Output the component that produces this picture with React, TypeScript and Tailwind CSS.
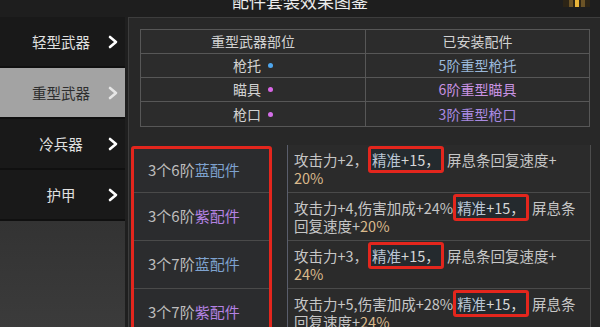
import React from "react";

type PartRow = { part: string; dot: string; installed: string; color: string };

const parts: PartRow[] = [
  { part: "枪托", dot: "bg-[#4ea6ee]", installed: "5阶重型枪托", color: "text-[#9ab8da]" },
  { part: "瞄具", dot: "bg-[#d866e6]", installed: "6阶重型瞄具", color: "text-[#c892e2]" },
  { part: "枪口", dot: "bg-[#d46ee8]", installed: "3阶重型枪口", color: "text-[#a98ae2]" },
];

const menu = [
  { label: "轻型武器", active: false },
  { label: "重型武器", active: true },
  { label: "冷兵器", active: false },
  { label: "护甲", active: false },
];

function Chevron({ light }: { light?: boolean }) {
  return (
    <svg width="10" height="14" viewBox="0 0 10 14" className="ml-[8px] shrink-0">
      <polyline
        points="2,2 8,7 2,12"
        fill="none"
        stroke={light ? "#e6e6e6" : "#ffffff"}
        strokeWidth="2.6"
        strokeLinecap="round"
        strokeLinejoin="round"
      />
    </svg>
  );
}

function Accuracy() {
  return (
    <span className="rounded-[3px] border-[3px] border-[#e3261d] bg-[#242a2e] px-[1px] text-[#d6d6d6]">
      <span className="text-[#b9c6d4]">精准</span>+15，
    </span>
  );
}

const Tan = ({ children }: { children: React.ReactNode }) => (
  <span className="text-[#d9b98b]">{children}</span>
);

const sets = [
  {
    tier: "3个6阶",
    kind: "蓝配件",
    kindColor: "text-[#7ea2ce]",
    lines: [
      <>攻击力+2，<Accuracy /> 屏息条回复速度+</>,
      <Tan>20%</Tan>,
    ],
  },
  {
    tier: "3个6阶",
    kind: "紫配件",
    kindColor: "text-[#b482e2]",
    lines: [
      <>攻击力+4,伤害加成+24%<Accuracy /> 屏息条</>,
      <>回复速度+<Tan>20%</Tan></>,
    ],
  },
  {
    tier: "3个7阶",
    kind: "蓝配件",
    kindColor: "text-[#7ea2ce]",
    lines: [
      <>攻击力+3，<Accuracy /> 屏息条回复速度+</>,
      <Tan>24%</Tan>,
    ],
  },
  {
    tier: "3个7阶",
    kind: "紫配件",
    kindColor: "text-[#b482e2]",
    lines: [
      <>攻击力+5,伤害加成+28%<Accuracy /> 屏息条</>,
      <>回复速度+<Tan>24%</Tan></>,
    ],
  },
];

export default function App() {
  return (
    <div className="flex h-[327px] w-[600px] flex-col overflow-hidden bg-[#1f1f1f] font-['Noto_Sans_CJK_SC',sans-serif] text-[14px]">
      <header className="relative flex h-[17px] shrink-0 justify-center overflow-hidden bg-[#1e1e1e]">
        <div className="-mt-[8px] text-[17px] leading-[17px] text-[#ececec]">配件套装效果图鉴</div>
        <div className="absolute right-[10px] top-0 flex h-[7px] w-[27px] items-stretch justify-center gap-[2px] bg-[#2c2416] px-[4px]">
          <span className="w-[4px] bg-[#6b5326]" />
          <span className="w-[4px] bg-[#e9b53a]" />
          <span className="w-[4px] bg-[#6b5326]" />
        </div>
      </header>

      <div className="flex min-h-0 flex-1">
        <aside className="flex w-[125px] shrink-0 flex-col gap-[2px] bg-[#101010] text-[14.5px]">
          {menu.map((m) => (
            <div
              key={m.label}
              className={`flex h-[49px] items-center ${
                m.active ? "bg-[#a3a3a3] text-[#2e2e2e]" : "bg-[#191919] text-[#e0e0e0]"
              }`}
            >
              <span className="w-[100px] pl-[22px] text-center">{m.label}</span>
              <Chevron light={m.active} />
            </div>
          ))}
          <div className="flex-1 bg-[linear-gradient(180deg,#333333,#3b3b3b)]" />
        </aside>

        <main className="ml-[3px] flex-1 border-l border-t border-[#3d3d3d] bg-[#282828] pt-[11px]">
          <div className="ml-[11px] w-[450px] border border-[#575757] bg-[#2c2c2c] text-[#d2d2d2]">
            <div className="grid h-[24px] grid-cols-[225px_1fr] border-b border-[#575757]">
              <div className="flex items-center justify-center border-r border-[#575757]">重型武器部位</div>
              <div className="flex items-center justify-center">已安装配件</div>
            </div>
            {parts.map((p, i) => (
              <div
                key={p.part}
                className={`grid h-[24px] grid-cols-[225px_1fr] ${i < parts.length - 1 ? "border-b border-[#575757]" : ""}`}
              >
                <div className="flex items-center justify-center gap-[7px] border-r border-[#575757]">
                  {p.part}
                  <span className={`h-[5px] w-[5px] rounded-full ${p.dot}`} />
                </div>
                <div className={`flex items-center justify-center ${p.color}`}>{p.installed}</div>
              </div>
            ))}
          </div>

          <div className="mt-[18px] flex">
            <div className="ml-[2px] mt-[1px] w-[141px] rounded-[3px] border-[3px] border-[#e3261d] bg-[#2b2c2e] text-[15px]">
              {sets.map((s, i) => (
                <div
                  key={i}
                  className={`flex items-center border-b border-[#4a4a4a] pl-[14px] text-[#bdbdbd] ${
                    i === 0 ? "h-[44px]" : "h-[48px]"
                  }`}
                >
                  {s.tier}
                  <span className={s.kindColor}>{s.kind}</span>
                </div>
              ))}
            </div>

            <div className="ml-[15px] w-[304px] border-x border-l-[#5a5e6c] border-r-[#4d4d4d] bg-[#2b2b2b] text-[14.5px]">
              {sets.map((s, i) => (
                <div
                  key={i}
                  className="flex h-[48px] flex-col justify-center border-b border-[#4a4a4a] pl-[6px] leading-[18px] text-[#c6c6c6]"
                >
                  {s.lines.map((l, j) => (
                    <div key={j} className="whitespace-nowrap">
                      {l}
                    </div>
                  ))}
                </div>
              ))}
            </div>
          </div>
        </main>
      </div>
    </div>
  );
}
